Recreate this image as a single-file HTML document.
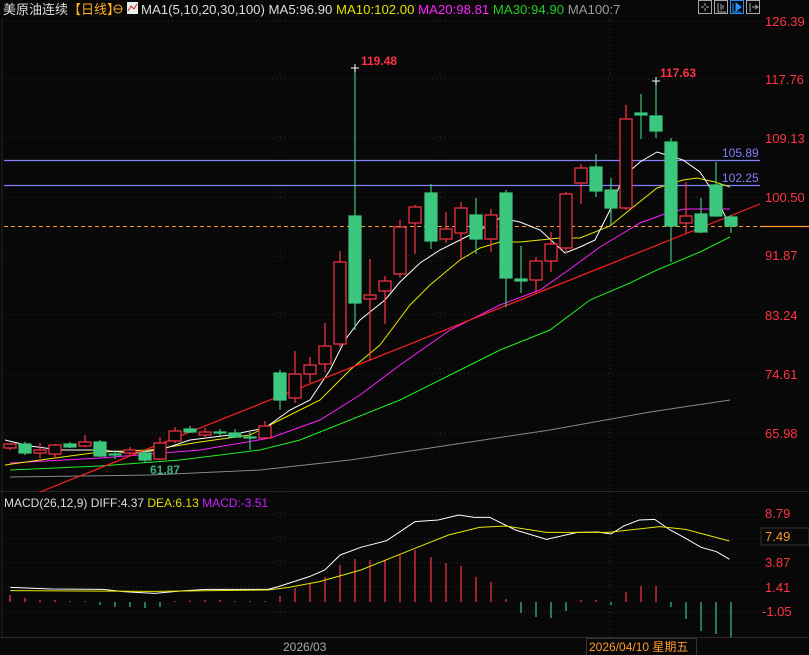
<!DOCTYPE html>
<html><head><meta charset="utf-8"><style>
html,body{margin:0;padding:0;background:#080808;width:809px;height:655px;overflow:hidden}
svg{display:block}
text{font-family:"Liberation Sans","Noto Sans CJK SC",sans-serif}
</style></head><body>
<svg width="809" height="655" viewBox="0 0 809 655" xmlns="http://www.w3.org/2000/svg">
<rect width="809" height="655" fill="#080808"/>
<line x1="2" y1="18" x2="2" y2="637" stroke="#262626"/>
<line x1="0" y1="491.5" x2="809" y2="491.5" stroke="#2a2a2a"/>
<line x1="0" y1="637.5" x2="809" y2="637.5" stroke="#2a2a2a"/>
<g stroke="#2e2e2e" stroke-dasharray="1,3">
<line x1="4" y1="21" x2="760" y2="21"/><line x1="4" y1="79" x2="760" y2="79"/><line x1="4" y1="138" x2="760" y2="138"/><line x1="4" y1="197" x2="760" y2="197"/><line x1="4" y1="256" x2="760" y2="256"/><line x1="4" y1="315" x2="760" y2="315"/><line x1="4" y1="374" x2="760" y2="374"/><line x1="4" y1="433" x2="760" y2="433"/>
<line x1="4" y1="515" x2="760" y2="515"/><line x1="4" y1="539" x2="760" y2="539"/><line x1="4" y1="563" x2="760" y2="563"/><line x1="4" y1="587" x2="760" y2="587"/><line x1="4" y1="612" x2="760" y2="612"/>
<line x1="280" y1="20" x2="280" y2="637"/><line x1="610" y1="20" x2="610" y2="637"/><line x1="440" y1="20" x2="440" y2="490"/>
</g>
<line x1="4" y1="160.5" x2="760" y2="160.5" stroke="#7f7fff" stroke-width="1.3"/>
<line x1="4" y1="185.5" x2="760" y2="185.5" stroke="#7f7fff" stroke-width="1.3"/>
<line x1="4" y1="226.5" x2="760" y2="226.5" stroke="#ff9a2e" stroke-dasharray="4,3"/>
<line x1="760" y1="226.5" x2="809" y2="226.5" stroke="#ff9a2e" stroke-width="1.2"/>
<text x="722" y="157" fill="#8080ff" font-size="12">105.89</text>
<text x="722" y="182" fill="#8080ff" font-size="12">102.25</text>
<g fill="none" stroke-width="1">
<polyline stroke="#888" points="10,477 150,475 260,470 350,460 450,445 550,430 650,412 730,400"/>
<polyline stroke="#22ee22" points="10,470 100,466 180,460 260,450 300,440 350,420 400,400 450,375 500,350 550,330 590,300 630,283 657,270 700,252 730,237"/>
<polyline stroke="#ff22ff" points="10,463 100,458 200,450 270,438 320,420 360,395 400,365 450,330 500,305 540,290 570,269 600,247 640,223 670,212 685,209 730,209"/>
<polyline stroke="#e8e800" points="5,465 40,460 100,452 150,450 200,442 250,435 280,420 320,400 350,370 380,345 410,305 430,285 460,260 480,248 500,242 520,242 540,240 560,238 580,238 610,226 627,212 657,188 683,180 697,178 715,182 730,187"/>
<polyline stroke="#ffffff" points="5,440 30,446 60,450 100,450 130,453 160,450 190,440 230,435 265,428 290,410 310,400 330,370 345,340 360,320 385,300 400,282 420,263 440,250 460,240 480,230 500,218 520,222 540,230 565,253 580,247 595,240 610,210 623,177 640,162 657,152 683,160 700,172 715,195 728,222"/>
</g>
<line x1="40" y1="492" x2="760" y2="204" stroke="#ff2020" stroke-width="1.2"/>
<g stroke-width="1.2">
<g stroke="#ff3348" fill="#080808">
<line x1="10" y1="443" x2="10" y2="450"/><rect x="4" y="444" width="12" height="4"/>
<line x1="40" y1="443" x2="40" y2="458"/><rect x="34" y="450" width="12" height="3"/>
<line x1="55" y1="444" x2="55" y2="458"/><rect x="49" y="445" width="12" height="9"/>
<line x1="85" y1="435" x2="85" y2="447"/><rect x="79" y="442" width="12" height="4"/>
<line x1="130" y1="447" x2="130" y2="455"/><rect x="124" y="450" width="12" height="3"/>
<line x1="160" y1="437" x2="160" y2="460"/><rect x="154" y="443" width="12" height="16"/>
<line x1="175" y1="427" x2="175" y2="443"/><rect x="169" y="431" width="12" height="10"/>
<line x1="205" y1="428" x2="205" y2="437"/><rect x="199" y="432" width="12" height="3"/>
<line x1="265" y1="421" x2="265" y2="439"/><rect x="259" y="426" width="12" height="12"/>
<line x1="295" y1="351" x2="295" y2="403"/><rect x="289" y="374" width="12" height="24"/>
<line x1="310" y1="357" x2="310" y2="383"/><rect x="304" y="365" width="12" height="9"/>
<line x1="325" y1="323" x2="325" y2="372"/><rect x="319" y="346" width="12" height="18"/>
<line x1="340" y1="251" x2="340" y2="347"/><rect x="334" y="262" width="12" height="82"/>
<line x1="370" y1="259" x2="370" y2="360"/><rect x="364" y="295" width="12" height="4"/>
<line x1="385" y1="276" x2="385" y2="324"/><rect x="379" y="281" width="12" height="10"/>
<line x1="400" y1="220" x2="400" y2="278"/><rect x="394" y="227" width="12" height="47"/>
<line x1="415" y1="205" x2="415" y2="254"/><rect x="409" y="207" width="12" height="16"/>
<line x1="446" y1="212" x2="446" y2="243"/><rect x="440" y="229" width="12" height="10"/>
<line x1="461" y1="202" x2="461" y2="259"/><rect x="455" y="208" width="12" height="25"/>
<line x1="491" y1="209" x2="491" y2="252"/><rect x="485" y="215" width="12" height="24"/>
<line x1="536" y1="257" x2="536" y2="293"/><rect x="530" y="261" width="12" height="19"/>
<line x1="551" y1="232" x2="551" y2="272"/><rect x="545" y="244" width="12" height="17"/>
<line x1="566" y1="192" x2="566" y2="253"/><rect x="560" y="194" width="12" height="54"/>
<line x1="581" y1="164" x2="581" y2="204"/><rect x="575" y="168" width="12" height="15"/>
<line x1="626" y1="105" x2="626" y2="210"/><rect x="620" y="119" width="12" height="89"/>
<line x1="686" y1="182" x2="686" y2="233"/><rect x="680" y="216" width="12" height="7"/>
</g>
<g stroke="#3cc77e" fill="#3cc77e">
<line x1="25" y1="442" x2="25" y2="455"/><rect x="19" y="444" width="12" height="9"/>
<line x1="70" y1="442" x2="70" y2="448"/><rect x="64" y="444" width="12" height="3"/>
<line x1="100" y1="440" x2="100" y2="457"/><rect x="94" y="442" width="12" height="14"/>
<line x1="115" y1="450" x2="115" y2="459"/><rect x="109" y="454" width="12" height="1"/>
<line x1="145" y1="450" x2="145" y2="463"/><rect x="139" y="453" width="12" height="7"/>
<line x1="190" y1="426" x2="190" y2="433"/><rect x="184" y="429" width="12" height="3"/>
<line x1="220" y1="429" x2="220" y2="436"/><rect x="214" y="432" width="12" height="1"/>
<line x1="235" y1="429" x2="235" y2="438"/><rect x="229" y="433" width="12" height="4"/>
<line x1="250" y1="432" x2="250" y2="450"/><rect x="244" y="437" width="12" height="1"/>
<line x1="280" y1="370" x2="280" y2="410"/><rect x="274" y="373" width="12" height="27"/>
<line x1="355" y1="68" x2="355" y2="330"/><rect x="349" y="216" width="12" height="87"/>
<line x1="431" y1="184" x2="431" y2="249"/><rect x="425" y="193" width="12" height="48"/>
<line x1="476" y1="198" x2="476" y2="254"/><rect x="470" y="215" width="12" height="24"/>
<line x1="506" y1="190" x2="506" y2="307"/><rect x="500" y="193" width="12" height="85"/>
<line x1="521" y1="246" x2="521" y2="293"/><rect x="515" y="279" width="12" height="2"/>
<line x1="596" y1="154" x2="596" y2="197"/><rect x="590" y="167" width="12" height="24"/>
<line x1="611" y1="178" x2="611" y2="225"/><rect x="605" y="190" width="12" height="18"/>
<line x1="641" y1="94" x2="641" y2="139"/><rect x="635" y="113" width="12" height="2"/>
<line x1="656" y1="81" x2="656" y2="138"/><rect x="650" y="116" width="12" height="15"/>
<line x1="671" y1="138" x2="671" y2="262"/><rect x="665" y="142" width="12" height="84"/>
<line x1="701" y1="198" x2="701" y2="233"/><rect x="695" y="214" width="12" height="18"/>
<line x1="716" y1="162" x2="716" y2="216"/><rect x="710" y="185" width="12" height="31"/>
<line x1="731" y1="215" x2="731" y2="233"/><rect x="725" y="217" width="12" height="9"/>
</g>
</g>
<g stroke="#fff"><line x1="351" y1="68" x2="359" y2="68"/><line x1="355" y1="64" x2="355" y2="72"/><line x1="652" y1="81" x2="660" y2="81"/><line x1="656" y1="77" x2="656" y2="85"/></g>
<text x="361" y="65" fill="#ff3344" font-size="12" font-weight="bold">119.48</text>
<text x="660" y="77" fill="#ff3344" font-size="12" font-weight="bold">117.63</text>
<text x="150" y="474" fill="#3cb07a" font-size="12" font-weight="bold">61.87</text>
<g fill="#ff3344" font-size="13">
<text x="765" y="26">126.39</text><text x="765" y="84">117.76</text><text x="765" y="143">109.13</text><text x="765" y="202">100.50</text><text x="765" y="260">91.87</text><text x="765" y="320">83.24</text><text x="765" y="379">74.61</text><text x="765" y="438">65.98</text>
<text x="765" y="518">8.79</text><text x="765" y="567">3.87</text><text x="765" y="592">1.41</text><text x="762" y="616">-1.05</text>
</g>
<rect x="761" y="528" width="48" height="17" fill="#080808" stroke="#333"/>
<text x="765" y="541" fill="#ff9a2e" font-size="13">7.49</text>
<g stroke-width="1.2">
<g stroke="#ff3348">
<line x1="10" y1="602" x2="10" y2="595"/><line x1="25" y1="602" x2="25" y2="598"/><line x1="40" y1="602" x2="40" y2="600"/><line x1="55" y1="602" x2="55" y2="600"/><line x1="70" y1="602" x2="70" y2="601"/><line x1="85" y1="602" x2="85" y2="601"/>
<line x1="175" y1="602" x2="175" y2="601"/><line x1="190" y1="602" x2="190" y2="600.5"/><line x1="205" y1="602" x2="205" y2="600"/><line x1="220" y1="602" x2="220" y2="600"/><line x1="235" y1="602" x2="235" y2="601"/><line x1="250" y1="602" x2="250" y2="601"/><line x1="265" y1="602" x2="265" y2="601"/>
<line x1="280" y1="602" x2="280" y2="596"/><line x1="295" y1="602" x2="295" y2="588"/><line x1="310" y1="602" x2="310" y2="583"/><line x1="325" y1="602" x2="325" y2="577"/><line x1="340" y1="602" x2="340" y2="565"/><line x1="355" y1="602" x2="355" y2="559"/><line x1="370" y1="602" x2="370" y2="560"/><line x1="385" y1="602" x2="385" y2="560"/><line x1="400" y1="602" x2="400" y2="555"/><line x1="415" y1="602" x2="415" y2="550"/><line x1="431" y1="602" x2="431" y2="557"/><line x1="446" y1="602" x2="446" y2="563"/><line x1="461" y1="602" x2="461" y2="566"/><line x1="476" y1="602" x2="476" y2="577"/><line x1="491" y1="602" x2="491" y2="582"/><line x1="506" y1="602" x2="506" y2="599"/>
<line x1="581" y1="602" x2="581" y2="600"/><line x1="596" y1="602" x2="596" y2="600"/><line x1="626" y1="602" x2="626" y2="592"/><line x1="641" y1="602" x2="641" y2="586"/><line x1="656" y1="602" x2="656" y2="586"/>
</g>
<g stroke="#3cc77e">
<line x1="100" y1="602" x2="100" y2="605"/><line x1="115" y1="602" x2="115" y2="607"/><line x1="130" y1="602" x2="130" y2="607"/><line x1="145" y1="602" x2="145" y2="608"/><line x1="160" y1="602" x2="160" y2="607"/>
<line x1="521" y1="602" x2="521" y2="613"/><line x1="536" y1="602" x2="536" y2="617"/><line x1="551" y1="602" x2="551" y2="618"/><line x1="566" y1="602" x2="566" y2="611"/><line x1="611" y1="602" x2="611" y2="605"/>
<line x1="671" y1="602" x2="671" y2="607"/><line x1="686" y1="602" x2="686" y2="619"/><line x1="701" y1="602" x2="701" y2="631"/><line x1="716" y1="602" x2="716" y2="634"/><line x1="731" y1="602" x2="731" y2="637"/>
</g>
</g>
<g transform="translate(0,490) scale(0.5155,0.3333)" fill="none">
<polyline vector-effect="non-scaling-stroke" stroke="#ffffff" stroke-width="1" points="20,292 100,297 200,298 240,305 300,310 350,303 400,298 520,298 540,290 600,260 630,240 660,195 700,172 750,152 805,95 850,90 890,75 920,82 950,82 1000,120 1060,148 1120,127 1160,126 1185,132 1210,108 1240,90 1270,88 1300,120 1330,145 1360,172 1390,185 1415,208"/>
<polyline vector-effect="non-scaling-stroke" stroke="#e8e800" stroke-width="1" points="20,302 300,304 520,300 560,292 620,275 700,240 800,178 870,135 930,112 980,108 1060,127 1180,127 1280,110 1330,118 1415,153"/>
</g>
<text x="3" y="14" font-size="13"><tspan fill="#ddd">美原油连续</tspan><tspan fill="#ffb020">【日线】</tspan></text>
<circle cx="118" cy="9" r="4" fill="none" stroke="#ffb020"/><line x1="114" y1="9" x2="122" y2="9" stroke="#ffb020"/>
<rect x="127" y="2" width="11" height="12" fill="#eee"/><polyline points="128,11 131,6 134,9 137,4" stroke="#d02020" fill="none"/>
<text x="141" y="14" font-size="13.2"><tspan fill="#ddd">MA1(5,10,20,30,100) MA5:96.90 </tspan><tspan fill="#e0e000"> MA10:102.00 </tspan><tspan fill="#ff22ff"> MA20:98.81 </tspan><tspan fill="#22cc22"> MA30:94.90 </tspan><tspan fill="#999"> MA100:7</tspan></text>
<g fill="none" stroke="#aaa">
<rect x="698.5" y="0.5" width="13" height="13"/><rect x="714.5" y="0.5" width="13" height="13"/><rect x="730.5" y="0.5" width="13" height="13" stroke="#2a8fff"/><rect x="746.5" y="0.5" width="13" height="13"/>
<path d="M705 3v3M705 8v3M701 7h3M706 7h3"/>
<path d="M718 3v9h8M721 4v6M723 5v4"/>
<path d="M733 3v9h8" stroke="#2a8fff"/><path d="M736 3l5 4-5 4z" fill="#2a8fff" stroke="#2a8fff"/>
<path d="M750 3v9M752 7h6M755 5l3 2-3 2"/>
</g>
<text x="4" y="507" font-size="12"><tspan fill="#ddd">MACD(26,12,9) DIFF:4.37 </tspan><tspan fill="#e0e000"> DEA:6.13 </tspan><tspan fill="#cc22ff"> MACD:-3.51</tspan></text>
<text x="283" y="651" fill="#aaa" font-size="12">2026/03</text>
<rect x="586.5" y="638.5" width="110" height="17" fill="#080808" stroke="#333"/>
<text x="589" y="651" fill="#ff9a2e" font-size="12">2026/04/10 星期五</text>
</svg>
</body></html>
